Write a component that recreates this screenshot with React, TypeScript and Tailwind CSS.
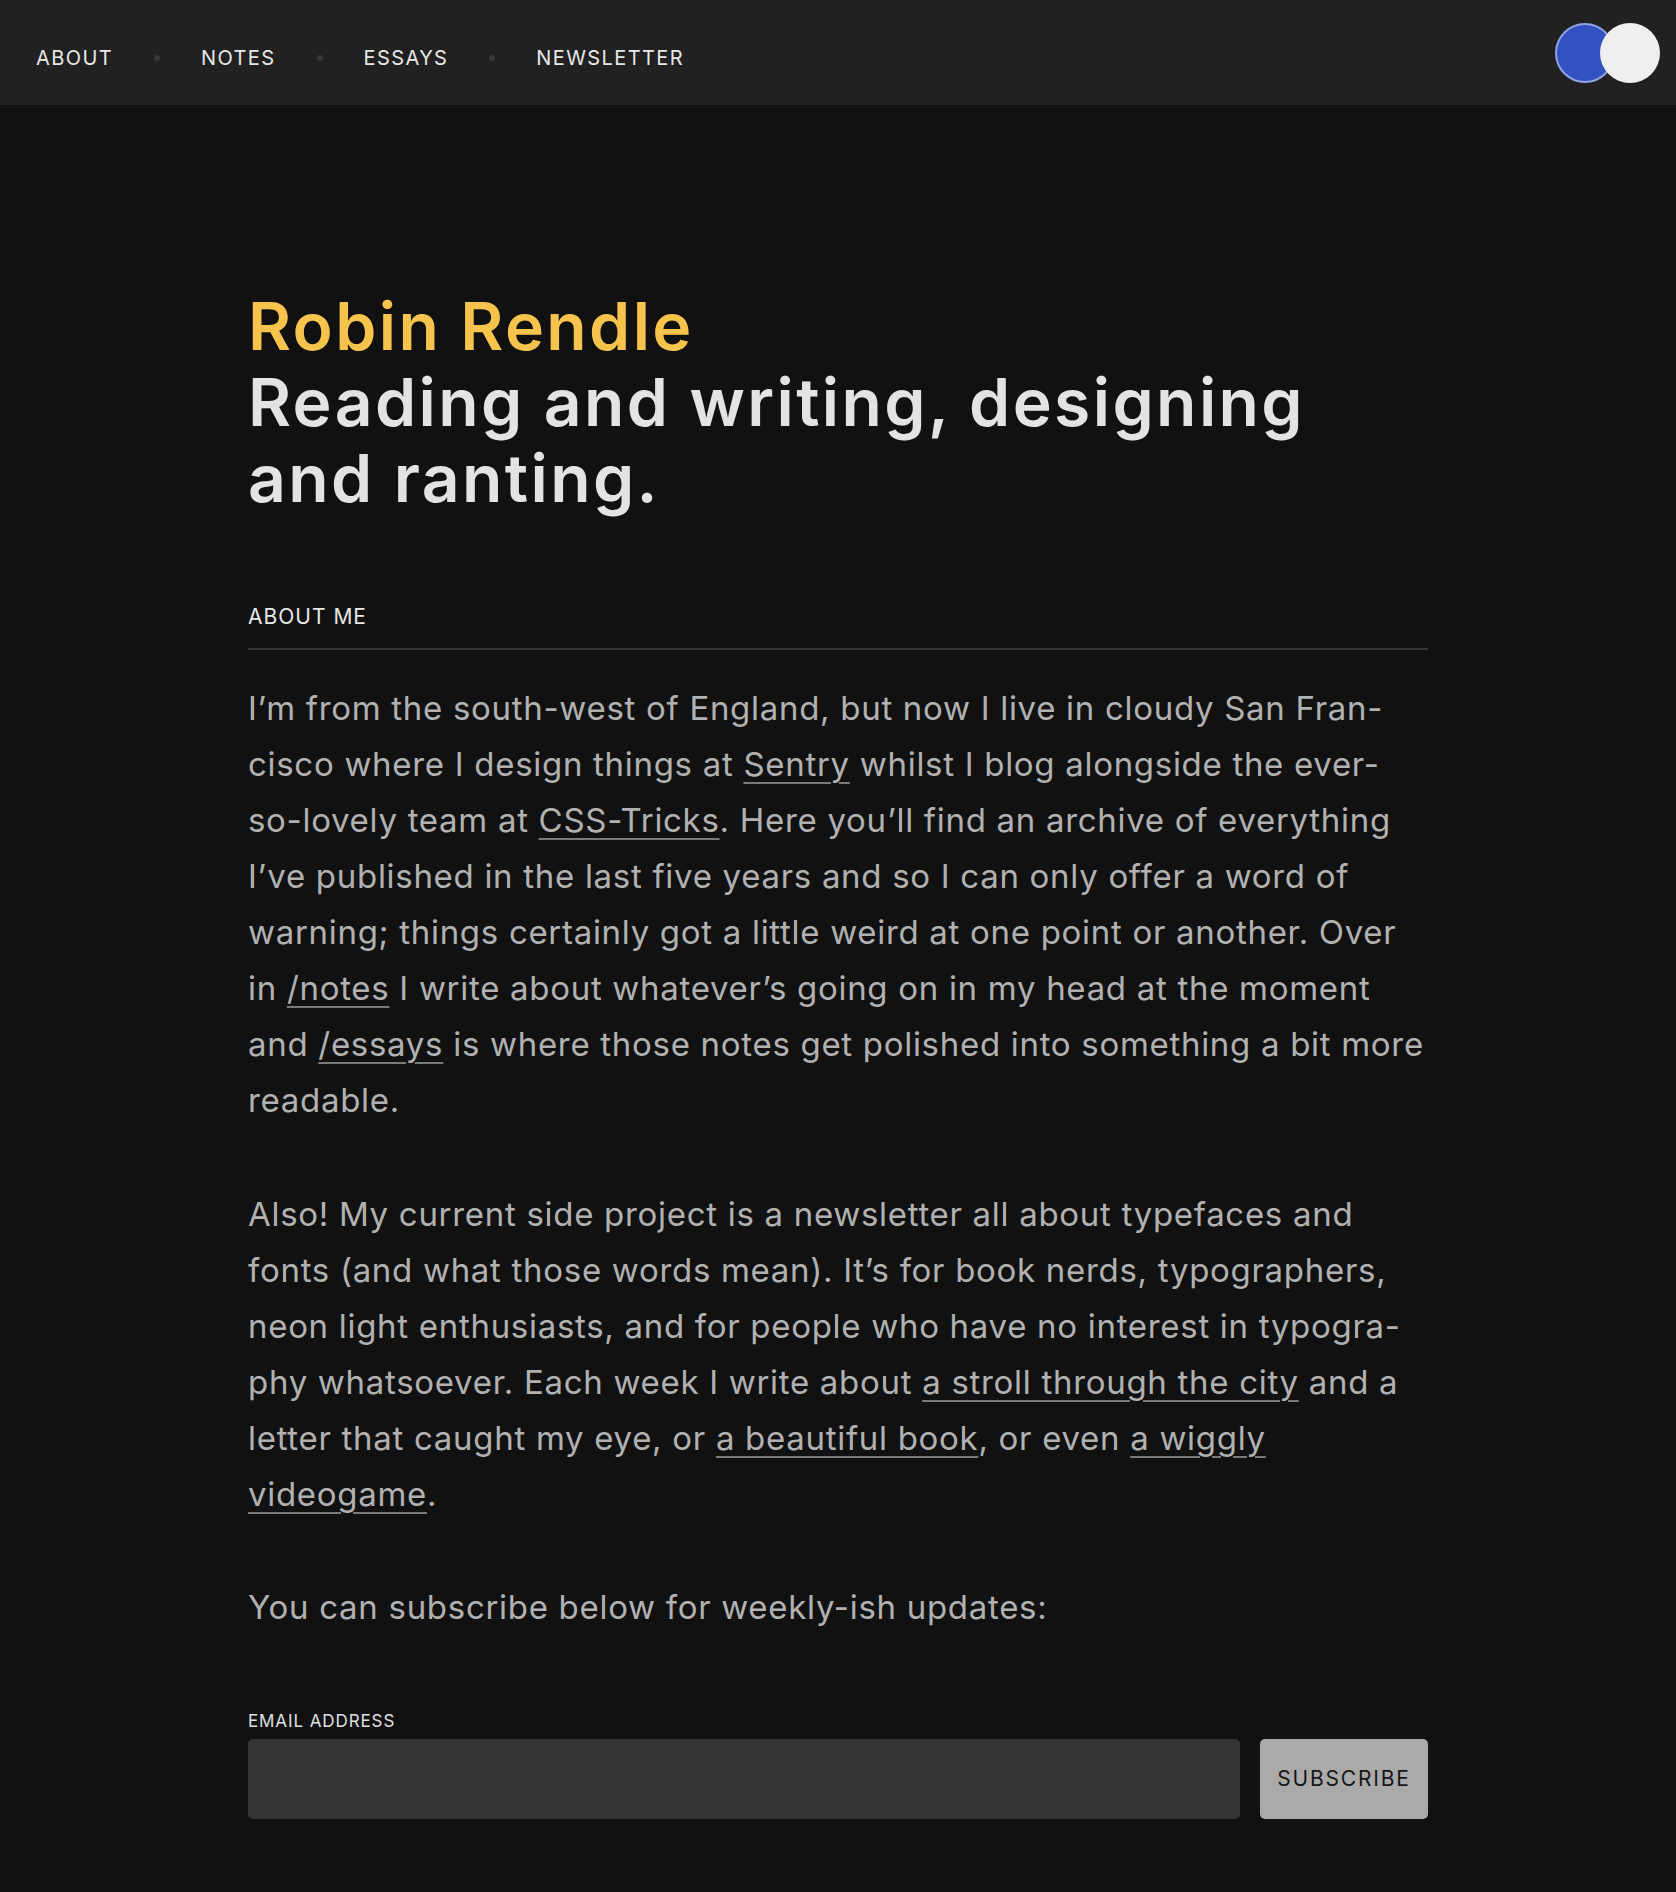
import React from "react";

const L = ({ children }: { children: React.ReactNode }) => (
  <a
    href="#"
    className="underline decoration-[#7a7a7a] decoration-2 underline-offset-[6px]"
  >
    {children}
  </a>
);

const Line = ({ children }: { children: React.ReactNode }) => (
  <span className="block whitespace-nowrap">{children}</span>
);

export default function App() {
  const font = { fontFamily: "Inter, 'Liberation Sans', sans-serif" };
  return (
    <div className="min-h-screen bg-[#111111]" style={font}>
      <header className="flex h-[105px] items-center justify-between bg-[#212121] pl-[36px] pr-[16px]">
        <nav className="flex items-center gap-[41px] pt-[11px] text-[20px] tracking-[1.4px] text-[#e8e8e8]">
          <a href="#">ABOUT</a>
          <span className="h-[6px] w-[6px] rounded-full bg-[#383838]" />
          <a href="#">NOTES</a>
          <span className="h-[6px] w-[6px] rounded-full bg-[#383838]" />
          <a href="#">ESSAYS</a>
          <span className="h-[6px] w-[6px] rounded-full bg-[#383838]" />
          <a href="#">NEWSLETTER</a>
        </nav>
        <div className="flex items-center">
          <span className="h-[60px] w-[60px] rounded-full border-2 border-[#8ea3e4] bg-[#3451c1]" />
          <span className="-ml-[15px] h-[60px] w-[60px] rounded-full bg-[#efefef]" />
        </div>
      </header>

      <main className="mx-auto w-[1180px] pt-[183px] pb-[74px]">
        <h1 className="text-[66px] font-semibold leading-[76px] tracking-[2.4px]">
          <span className="block text-[#f6c34c]">Robin Rendle</span>
          <span className="block text-[#e3e3e3]">Reading and writing, designing</span>
          <span className="block text-[#e3e3e3]">and ranting.</span>
        </h1>

        <h2 className="mt-[87px] border-b-2 border-[#353535] pb-[17px] text-[21px] leading-[28px] tracking-[1px] text-[#e8e8e8]">
          ABOUT ME
        </h2>

        <div className="mt-[30px] text-[33px] leading-[56px] tracking-[0.7px] text-[#b1b1b1]">
          <p>
            <Line>I’m from the south-west of England, but now I live in cloudy San Fran-</Line>
            <Line>cisco where I design things at <L>Sentry</L> whilst I blog alongside the ever-</Line>
            <Line>so-lovely team at <L>CSS-Tricks</L>. Here you’ll find an archive of everything</Line>
            <Line>I’ve published in the last five years and so I can only offer a word of</Line>
            <Line>warning; things certainly got a little weird at one point or another. Over</Line>
            <Line>in <L>/notes</L> I write about whatever’s going on in my head at the moment</Line>
            <Line>and <L>/essays</L> is where those notes get polished into something a bit more</Line>
            <Line>readable.</Line>
          </p>
          <p className="mt-[58px]">
            <Line>Also! My current side project is a newsletter all about typefaces and</Line>
            <Line>fonts (and what those words mean). It’s for book nerds, typographers,</Line>
            <Line>neon light enthusiasts, and for people who have no interest in typogra-</Line>
            <Line>phy whatsoever. Each week I write about <L>a stroll through the city</L> and a</Line>
            <Line>letter that caught my eye, or <L>a beautiful book</L>, or even <L>a wiggly</L></Line>
            <Line><L>videogame</L>.</Line>
          </p>
          <p className="mt-[57px]">
            <Line>You can subscribe below for weekly-ish updates:</Line>
          </p>
        </div>

        <form className="mt-[74px]" onSubmit={(e) => e.preventDefault()}>
          <label className="block text-[17px] leading-[24px] tracking-[0.9px] text-[#e0e0e0]">
            EMAIL ADDRESS
          </label>
          <div className="mt-[6px] flex gap-[20px]">
            <input
              type="email"
              className="h-[80px] w-[992px] rounded-[5px] bg-[#333333] px-4 text-[24px] text-[#eee] outline-none"
            />
            <button
              type="submit"
              className="h-[80px] flex-1 rounded-[5px] bg-[#aaaaaa] text-[21px] tracking-[1.8px] text-[#161616]"
            >
              SUBSCRIBE
            </button>
          </div>
        </form>
      </main>
    </div>
  );
}
